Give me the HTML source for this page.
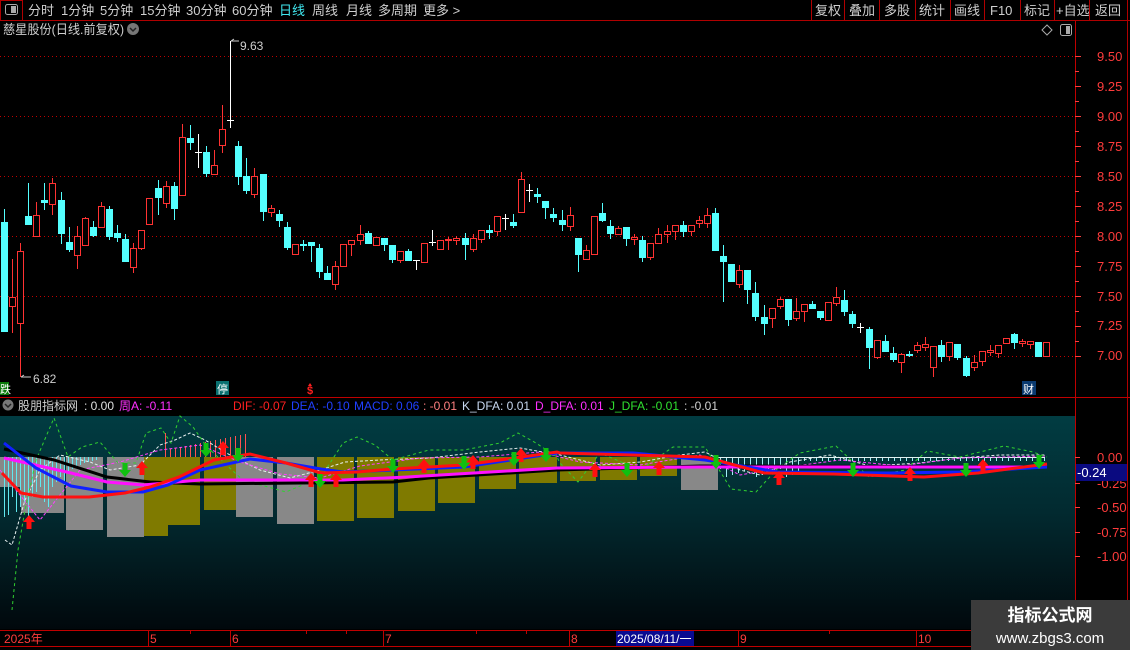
<!DOCTYPE html>
<html><head><meta charset="utf-8">
<style>
html,body{margin:0;padding:0;background:#000;width:1130px;height:650px;overflow:hidden;font-family:"Liberation Sans","Noto Sans CJK SC",sans-serif;}
svg{position:absolute;left:0;top:0}
</style></head><body>
<svg id="s" width="1130" height="650" xmlns="http://www.w3.org/2000/svg" font-family="Liberation Sans, Noto Sans CJK SC, sans-serif">
<defs>
<linearGradient id="g" x1="0" y1="0" x2="0" y2="1">
<stop offset="0" stop-color="#013c42"/><stop offset="0.45" stop-color="#022a30"/><stop offset="1" stop-color="#01080c"/>
</linearGradient>
</defs>
<rect x="0" y="0" width="1130" height="650" fill="#000"/>
<line x1="0" y1="20.5" x2="1130" y2="20.5" stroke="#b00000"/>
<rect x="0.5" y="0.5" width="22" height="20" fill="none" stroke="#b00000"/>
<rect x="5.5" y="4.5" width="12" height="10" rx="2" fill="none" stroke="#aaa"/>
<rect x="11" y="6" width="5" height="7" fill="#aaa"/>
<g font-size="13" fill="#cfcfcf">
<text x="28" y="15">分时</text><text x="61" y="15">1分钟</text><text x="100" y="15">5分钟</text>
<text x="140" y="15">15分钟</text><text x="186" y="15">30分钟</text><text x="232" y="15">60分钟</text>
<text x="279" y="15" fill="#40e8f0">日线</text><text x="312" y="15">周线</text><text x="346" y="15">月线</text>
<text x="378" y="15">多周期</text><text x="423" y="15">更多 &gt;</text>
<text x="815" y="15">复权</text><text x="849" y="15">叠加</text><text x="884" y="15">多股</text>
<text x="919" y="15">统计</text><text x="954" y="15">画线</text><text x="990" y="15">F10</text>
<text x="1024" y="15">标记</text><text x="1056" y="15">+自选</text><text x="1095" y="15">返回</text>
</g>
<g stroke="#b00000"><line x1="811.5" y1="0" x2="811.5" y2="20"/><line x1="844.5" y1="0" x2="844.5" y2="20"/><line x1="879.5" y1="0" x2="879.5" y2="20"/><line x1="915.5" y1="0" x2="915.5" y2="20"/><line x1="950.5" y1="0" x2="950.5" y2="20"/><line x1="984.5" y1="0" x2="984.5" y2="20"/><line x1="1020.5" y1="0" x2="1020.5" y2="20"/><line x1="1054.5" y1="0" x2="1054.5" y2="20"/><line x1="1089.5" y1="0" x2="1089.5" y2="20"/><line x1="1127.5" y1="0" x2="1127.5" y2="650"/></g>
<text x="3" y="34" font-size="13" fill="#cfcfcf" textLength="121" lengthAdjust="spacingAndGlyphs">慈星股份(日线.前复权)</text>
<circle cx="133" cy="29" r="6" fill="#777"/><path d="M130 28l3 3 3-3" stroke="#222" stroke-width="1.5" fill="none"/>
<path d="M1047 25l5 5-5 5-5-5z" fill="none" stroke="#aaa"/>
<rect x="1060.5" y="24.5" width="11" height="11" rx="2" fill="none" stroke="#aaa"/><rect x="1066" y="26" width="4" height="8" fill="#aaa"/>
<line x1="1075.5" y1="21" x2="1075.5" y2="650" stroke="#c00000"/>
<g stroke="#c00000" stroke-dasharray="1,3">
<line x1="0" y1="56.5" x2="1075" y2="56.5"/><line x1="0" y1="116.5" x2="1075" y2="116.5"/><line x1="0" y1="176.5" x2="1075" y2="176.5"/><line x1="0" y1="236.5" x2="1075" y2="236.5"/><line x1="0" y1="296.5" x2="1075" y2="296.5"/><line x1="0" y1="356.5" x2="1075" y2="356.5"/>
</g>
<g font-size="13" fill="#ff3c3c">
<text x="1097" y="61">9.50</text><text x="1097" y="91">9.25</text><text x="1097" y="121">9.00</text><text x="1097" y="151">8.75</text><text x="1097" y="181">8.50</text><text x="1097" y="211">8.25</text><text x="1097" y="241">8.00</text><text x="1097" y="271">7.75</text><text x="1097" y="301">7.50</text><text x="1097" y="330">7.25</text><text x="1097" y="360">7.00</text>
</g>
<g id="ticks" stroke="#ff3c3c"></g>
<g id="candles"></g>
<text x="240" y="50" font-size="12" fill="#cfcfcf">9.63</text><path d="M231 41h8M231 41l3-2" stroke="#cfcfcf" fill="none"/>
<text x="33" y="383" font-size="12" fill="#cfcfcf">6.82</text><path d="M21 377h10M21 377l3-2" stroke="#cfcfcf" fill="none"/>
<rect x="0" y="382" width="9" height="13" fill="#0a7a0a"/><text x="0" y="393" font-size="11" fill="#fff">跌</text>
<rect x="216" y="381" width="13" height="14" fill="#0a7070"/><text x="217" y="393" font-size="11" fill="#fff">停</text>
<text x="307" y="394" font-size="11" font-weight="bold" fill="#ff2020">$</text><path d="M310 383l-2 3h4z" fill="#ff2020"/>
<rect x="1022" y="381" width="14" height="14" fill="#0a3a70"/><text x="1023" y="393" font-size="11" fill="#fff">财</text>
<line x1="0" y1="397.5" x2="1130" y2="397.5" stroke="#c00000"/>
<circle cx="8" cy="405" r="5.5" fill="#777"/><path d="M5 404l3 3 3-3" stroke="#222" stroke-width="1.5" fill="none"/>
<g font-size="12">
<text x="18" y="410" fill="#cfcfcf">股朋指标网</text><text x="84" y="410" fill="#e0e0e0">: 0.00</text>
<text x="119" y="410" fill="#ff30ff">周A: -0.11</text>
<text x="233" y="410" fill="#ff2020">DIF: -0.07</text><text x="291" y="410" fill="#2040ff">DEA: -0.10</text>
<text x="354" y="410" fill="#2040ff">MACD: 0.06</text><text x="423" y="410" fill="#ff8080">: -0.01</text>
<text x="462" y="410" fill="#c8d8f0">K_DFA: 0.01</text><text x="535" y="410" fill="#ff30ff">D_DFA: 0.01</text>
<text x="609" y="410" fill="#30e030">J_DFA: -0.01</text><text x="684" y="410" fill="#d0d0d0">: -0.01</text>
</g>
<rect x="0" y="416" width="1075" height="213" fill="url(#g)"/>
<g id="ind"></g>
<g font-size="13" fill="#ff3c3c">
<text x="1097" y="462">0.00</text><text x="1097" y="488">-0.25</text><text x="1097" y="512">-0.50</text><text x="1097" y="537">-0.75</text><text x="1097" y="561">-1.00</text>
</g>
<g stroke="#ff3c3c"><line x1="1075" y1="457.5" x2="1080" y2="457.5"/><line x1="1075" y1="483.5" x2="1080" y2="483.5"/><line x1="1075" y1="507.5" x2="1080" y2="507.5"/><line x1="1075" y1="532.5" x2="1080" y2="532.5"/><line x1="1075" y1="556.5" x2="1080" y2="556.5"/></g>
<rect x="1076" y="464" width="51" height="17" fill="#0a0a80"/><text x="1077" y="477" font-size="13" fill="#fff">-0.24</text>
<line x1="0" y1="630.5" x2="1130" y2="630.5" stroke="#c00000"/>
<line x1="0" y1="646.5" x2="1130" y2="646.5" stroke="#c00000"/>
<g stroke="#c00000"><line x1="148.5" y1="630" x2="148.5" y2="646"/><line x1="230.5" y1="630" x2="230.5" y2="646"/><line x1="383.5" y1="630" x2="383.5" y2="646"/><line x1="569.5" y1="630" x2="569.5" y2="646"/><line x1="738.5" y1="630" x2="738.5" y2="646"/><line x1="916.5" y1="630" x2="916.5" y2="646"/>
<line x1="190.5" y1="631" x2="190.5" y2="634"/><line x1="306.5" y1="631" x2="306.5" y2="634"/><line x1="346.5" y1="631" x2="346.5" y2="634"/><line x1="476.5" y1="631" x2="476.5" y2="634"/><line x1="526.5" y1="631" x2="526.5" y2="634"/><line x1="829.5" y1="631" x2="829.5" y2="634"/></g>
<g font-size="12" fill="#ff3c3c"><text x="4" y="643">2025年</text><text x="150" y="643">5</text><text x="232" y="643">6</text><text x="385" y="643">7</text><text x="571" y="643">8</text><text x="740" y="643">9</text><text x="918" y="643">10</text></g>
<rect x="616" y="631" width="78" height="15" fill="#0a0a90"/><text x="617" y="643" font-size="12" fill="#fff">2025/08/11/一</text>
<rect x="971" y="600" width="159" height="50" fill="#3b3b3b"/>
<text x="1050" y="621" font-size="17" font-weight="bold" fill="#fff" text-anchor="middle">指标公式网</text>
<text x="1050" y="643" font-size="15" fill="#fff" text-anchor="middle">www.zbgs3.com</text>
</svg>
<script>
var NS="http://www.w3.org/2000/svg";
function el(p,t,a){var e=document.createElementNS(NS,t);for(var k in a)e.setAttribute(k,a[k]);p.appendChild(e);return e;}
var tk=document.getElementById('ticks');
[71,101,131,161,191,221,251,281,311,341].forEach(function(y){el(tk,'line',{x1:1075,x2:1079,y1:y+.5,y2:y+.5});});
[56,86,116,146,176,206,236,266,296,326,356].forEach(function(y){el(tk,'line',{x1:1075,x2:1081,y1:y+.5,y2:y+.5});});
var D=[
['d',222,332,209,332],['u',297,307,259,333],['u',251,324,243,377],['d',216,225,183,225],['u',215,237,202,237],['d',200,203,183,210],['u',183,205,178,215],['d',200,234,192,244],['d',242,250,227,252],['u',236,256,226,269],
['u',218,246,217,246],['d',227,236,221,237],['u',206,228,202,228],['d',209,237,206,240],['d',233,238,225,242],['d',239,262,234,262],['u',248,268,243,273],['u',230,249,230,250],['u',198,225,198,225],['d',188,198,180,215],
['u',186,204,181,208],['d',186,209,182,220],['u',137,196,124,196],['d',138,143,125,150],['w',152,152,134,168],['d',152,174,146,177],['u',165,175,150,175],['u',129,146,105,153],['w',120,120,41,128],['d',146,177,141,185],
['d',176,191,158,194],['u',176,195,168,198],['d',174,212,174,221],['u',208,213,205,217],['d',214,221,210,227],['d',227,248,222,250],['u',244,255,244,255],['d',244,246,240,251],['d',242,246,242,262],['d',248,272,244,278],
['d',273,280,266,280],['u',266,285,261,290],['u',244,267,244,267],['u',240,245,240,256],['u',234,241,225,245],['d',233,244,231,244],['u',237,246,237,246],['d',238,245,238,251],['d',245,260,245,263],['u',251,261,251,263],
['d',251,261,249,261],['w',260,260,260,270],['u',243,263,243,263],['w',242,242,230,246],['u',240,250,240,250],['u',239,240,237,250],['u',238,241,236,245],['d',238,245,233,260],['u',238,250,234,252],['u',230,240,230,243],
['d',230,233,225,239],['u',216,232,216,236],['w',218,218,214,230],['d',222,226,214,228],['u',179,213,172,213],['w',190,190,184,202],['d',194,197,188,203],['d',201,208,201,219],['d',214,218,208,222],['d',220,225,210,231],
['u',215,227,207,231],['d',238,255,238,272],['u',250,260,245,260],['u',216,255,216,255],['d',213,221,203,222],['d',226,234,220,239],['u',228,235,226,235],['d',227,239,227,246],['u',237,240,234,245],['d',240,258,236,262],
['u',243,258,243,260],['u',234,244,228,244],['u',231,235,225,243],['u',225,232,225,240],['d',225,232,221,237],['u',225,232,225,236],['u',220,224,216,228],['u',215,224,208,228],['d',213,251,208,251],['d',256,262,245,302],
['d',264,282,264,282],['u',270,285,265,288],['d',270,290,270,304],['d',293,317,282,321],['d',317,324,305,335],['u',308,319,308,328],['u',299,307,297,309],['d',299,320,299,326],['u',311,319,298,321],['u',304,312,304,322],
['d',304,309,301,309],['d',311,318,311,320],['u',302,321,302,321],['u',297,304,287,306],['d',300,312,290,316],['d',314,324,311,328],['w',327,327,323,333],['d',329,348,327,369],['u',340,358,340,359],['d',341,352,335,352],
['d',353,360,347,362],['u',354,363,353,373],['d',354,356,351,357],['u',345,351,342,353],['u',344,348,337,351],['u',346,368,346,377],['d',345,357,340,362],['u',342,357,342,361],['d',344,358,344,360],['d',358,376,356,377],
['u',362,368,355,371],['u',351,362,351,366],['u',350,353,345,356],['u',345,354,345,358],['u',338,344,338,344],['d',334,343,333,349],['u',341,344,339,347],['u',341,345,341,349],['d',342,357,342,357],['u',342,357,342,357]];
var cg=document.getElementById('candles');
D.forEach(function(c,i){
 var x=Math.round(4+i*8.08);
 var col=c[0]=='u'?'#ff3232':(c[0]=='d'?'#54ffff':'#ffffff');
 el(cg,'line',{x1:x+.5,x2:x+.5,y1:c[3],y2:c[4],stroke:col});
 if(c[0]=='w'){el(cg,'line',{x1:x-3,x2:x+4,y1:c[1]+.5,y2:c[1]+.5,stroke:col});}
 else if(c[0]=='u'){el(cg,'rect',{x:x-2.5,y:c[1]+.5,width:6,height:Math.max(1,c[2]-c[1]-1),fill:'#000',stroke:col});}
 else {el(cg,'rect',{x:x-3,y:c[1],width:7,height:Math.max(2,c[2]-c[1]),fill:col});}
});
var ig=document.getElementById('ind');
[[0,21,487,'#888'],[21,64,513,'#888'],[66,103,530,'#888'],[107,144,537,'#888'],[144,168,536,'#7f7a00'],[168,200,525,'#7f7a00'],[204,236,510,'#7f7a00'],[236,273,517,'#888'],[277,314,524,'#888'],[317,354,521,'#7f7a00'],[357,394,518,'#7f7a00'],[398,435,511,'#7f7a00'],[438,475,503,'#7f7a00'],[479,516,489,'#7f7a00'],[519,557,483,'#7f7a00'],[560,596,481,'#7f7a00'],[600,637,480,'#7f7a00'],[640,677,476,'#7f7a00']].forEach(function(b){el(ig,'rect',{x:b[0],y:457,width:b[1]-b[0],height:b[2]-457,fill:b[3]});});
el(ig,'rect',{x:681,y:459,width:37,height:31,fill:'#888'});
for(var x=4;x<100;x+=4){var h=[60,58,40,55,50,45,60,40,35,30,45,50,30,25,20,28,15,12,10,8,6,5,4,3][(x-4)/4]||5;el(ig,'line',{x1:x+.5,x2:x+.5,y1:457,y2:457+h,stroke:'#60e8f0'});}
for(var x=165;x<248;x+=5){el(ig,'line',{x1:x+.5,x2:x+.5,y1:457-(8+((x*7)%17)),y2:457,stroke:'#ff5050'});}
for(var x=720;x<1045;x+=6){var h=x<800?12+((x*3)%10):4+((x*5)%6);el(ig,'line',{x1:x+.5,x2:x+.5,y1:457,y2:457+h,stroke:'#a0f0f8'});}
el(ig,'line',{x1:718,x2:1045,y1:457.5,y2:457.5,stroke:'#e0f0f0'});
function pl(pts,st,w,da){el(ig,'polyline',{points:pts,fill:'none',stroke:st,'stroke-width':w,'stroke-dasharray':da||'none'});}
pl('5,540 12,545 25,500 40,470 60,455 90,462 110,470 140,465 160,445 175,440 190,433 205,440 230,455 260,470 290,478 320,470 345,462 380,460 430,458 480,452 520,448 560,455 600,465 640,462 680,455 705,452 740,470 760,475 790,462 830,455 870,466 920,463 960,458 1000,455 1045,455','#e8f0f0',1,'3,2');
pl('0,470 40,520 80,470 120,462 160,450 200,445 240,462 280,474 320,478 360,466 420,458 480,457 540,452 580,462 640,465 700,455 740,475 780,468 840,460 900,466 960,458 1045,456','#ff40ff',1,'3,2');
pl('12,610 18,550 25,510 36,460 54,418 68,457 82,447 100,442 118,463 136,463 146,433 161,428 171,443 180,416 193,427 207,447 246,483 261,485 286,492 321,477 343,443 357,437 375,445 393,460 429,450 464,450 500,443 518,433 536,443 557,457 560,463 578,482 600,453 640,470 673,447 705,447 731,489 756,492 778,468 800,453 836,446 869,477 905,470 927,451 960,457 1004,446 1033,452 1047,457','#30d030',1,'3,3');
pl('4,449 54,460 107,477 150,482 200,484 393,482 429,478 557,470 700,466 1045,467','#000',3);
pl('4,458 71,473 107,482 143,485 200,480 343,480 407,477 557,468 700,467 1045,467','#ff10ff',3);
pl('4,443 36,468 71,486 107,492 143,492 168,485 200,470 250,459 286,463 321,469 343,472 393,470 464,467 557,453 633,453 705,460 778,472 887,473 960,472 1047,467','#1020ff',3);
pl('2,473 21,493 43,497 89,497 125,493 150,487 179,477 214,460 250,454 286,463 321,473 357,472 393,469 464,465 557,452 560,453 705,457 764,473 833,474 924,477 978,473 1047,464','#ff1010',3);
function up(x,y){el(ig,'path',{d:'M'+x+' '+(y-7)+'l6 7h-3.5v7h-5v-7h-3.5z',fill:'#ff1010'});}
function dn(x,y){el(ig,'path',{d:'M'+x+' '+(y+7)+'l6 -7h-3.5v-7h-5v7h-3.5z',fill:'#10c010'});}
[[29,522],[142,468],[223,448],[311,480],[336,480],[424,466],[473,462],[521,455],[595,470],[659,468],[779,478],[910,474],[983,466]].forEach(function(a){up(a[0],a[1]);});
[[125,470],[206,450],[238,455],[320,481],[393,466],[464,463],[514,459],[546,455],[627,470],[716,462],[853,470],[966,470],[1039,462]].forEach(function(a){dn(a[0],a[1]);});
</script>
</body></html>
